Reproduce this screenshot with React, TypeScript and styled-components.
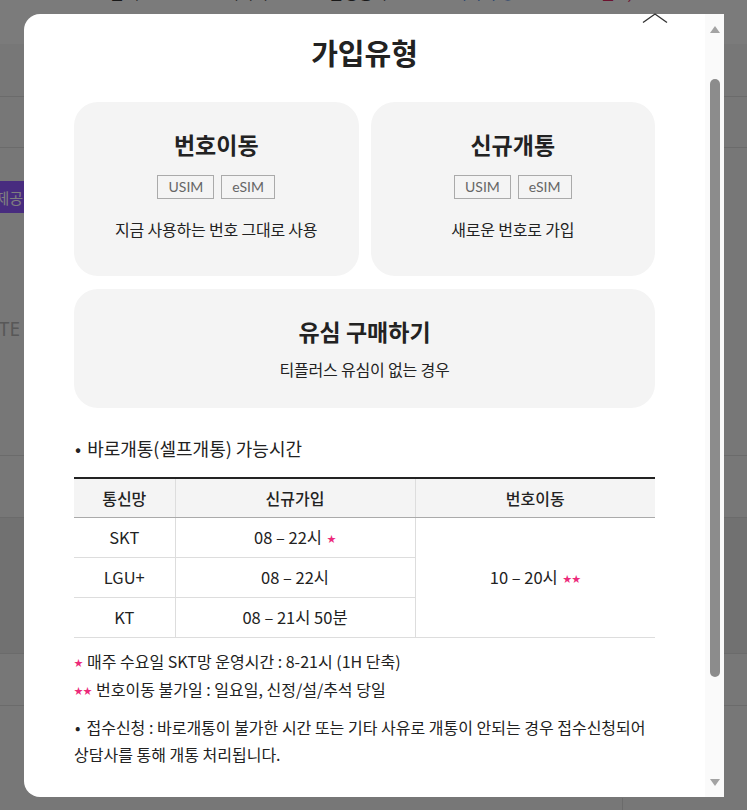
import styled, { createGlobalStyle } from 'styled-components'

const GlobalStyle = createGlobalStyle`
  html, body {
    margin: 0;
    padding: 0;
  }
  body {
    font-family: "Noto Sans CJK KR", "Noto Sans", sans-serif;
    color: #222222;
    overflow: hidden;
  }
  * {
    box-sizing: border-box;
  }
`;

/* ---------- page behind the dialog ---------- */

const Page = styled.div`
  width: 747px;
  height: 810px;
  overflow: hidden;
  background-color: #eeeeee;
  display: flex;
  flex-direction: column;
`;

const TopBar = styled.div`
  height: 44px;
  flex: none;
  background-color: #f6f6f6;
  display: flex;
  align-items: flex-start;
  overflow: hidden;
`;

const TopItem = styled.span<{ $w: number; $color?: string }>`
  flex: none;
  width: ${(p) => p.$w}px;
  margin-top: -18px;
  font-size: 16px;
  line-height: 20px;
  white-space: nowrap;
  color: ${(p) => p.$color || '#333333'};
`;

const BgRow = styled.div<{ $h: number; $shade?: boolean }>`
  flex: none;
  height: ${(p) => p.$h}px;
  border-bottom: 1px solid #d6d6d6;
  background-color: ${(p) => (p.$shade ? '#e2e2e2' : 'transparent')};
  display: flex;
  flex-direction: column;
`;

const BgFill = styled.div`
  flex: 1;
  display: flex;
  justify-content: flex-end;
  padding-right: 124px;
`;

const BgDivider = styled.div`
  width: 1px;
  margin-top: 92px;
  background-color: #d6d6d6;
`;

const Badge = styled.div`
  width: 24px;
  height: 32px;
  margin-top: 33px;
  overflow: hidden;
  display: flex;
  justify-content: flex-end;
  align-items: center;
  background-color: #9058ff;
  color: #ffffff;
  font-size: 15px;
  white-space: nowrap;
  padding-right: 1px;
`;

const SideText = styled.div`
  width: 20px;
  margin-top: 104px;
  overflow: hidden;
  display: flex;
  justify-content: flex-end;
  font-family: "Noto Sans", sans-serif;
  font-size: 19px;
  line-height: 24px;
  color: #b0b0b0;
`;

/* ---------- dialog ---------- */

const Dim = styled.div`
  position: fixed;
  inset: 0;
  background-color: rgba(0, 0, 0, 0.5);
`;

const Frame = styled.div`
  position: fixed;
  top: 14px;
  left: 24px;
  width: 700px;
  height: 783px;
`;

const Dialog = styled.div`
  width: 100%;
  height: 100%;
  display: flex;
  overflow: hidden;
  background-color: #ffffff;
  border-radius: 16px 0 0 16px;
`;

const CloseButton = styled.button`
  position: absolute;
  top: -2px;
  left: 618px;
  padding: 0;
  border: 0;
  background: none;
  line-height: 0;
`;

const Body = styled.div`
  flex: 1;
  overflow: hidden;
  padding: 18px 50px 0;
`;

const Scrollbar = styled.div`
  width: 19px;
  flex: none;
  background-color: #fafafa;
  display: flex;
  flex-direction: column;
  align-items: center;
  padding: 12px 0 11px;
`;

const Arrow = styled.div<{ $down?: boolean }>`
  width: 0;
  height: 0;
  border-left: 5px solid transparent;
  border-right: 5px solid transparent;
  ${(p) =>
    p.$down
      ? 'border-top: 7px solid #a3a3a3; margin-top: auto;'
      : 'border-bottom: 7px solid #a3a3a3;'}
`;

const Thumb = styled.div`
  width: 10px;
  height: 598px;
  margin-top: 46px;
  border-radius: 5px;
  background-color: #8c8c8c;
`;

const Title = styled.h2`
  margin: 0;
  text-align: center;
  font-size: 29px;
  line-height: 40px;
  font-weight: 700;
  color: #222222;
`;

const CardGrid = styled.div`
  margin-top: 30px;
  display: grid;
  grid-template-columns: 1fr 1fr;
  column-gap: 12px;
  row-gap: 13px;
`;

const Card = styled.div<{ $wide?: boolean }>`
  grid-column: ${(p) => (p.$wide ? 'span 2' : 'auto')};
  background-color: #f4f4f4;
  border-radius: 24px;
  text-align: center;
  padding: 27px 0 ${(p) => (p.$wide ? 27 : 35)}px;
`;

const CardTitle = styled.div`
  font-size: 23px;
  line-height: 30px;
  font-weight: 700;
  color: #222222;
`;

const TagRow = styled.div`
  margin-top: 16px;
  display: flex;
  justify-content: center;
  gap: 7px;
`;

const Tag = styled.span`
  height: 24px;
  padding: 0 10px;
  border: 1px solid #aaaaaa;
  font-family: Lato, "Noto Sans", sans-serif;
  font-size: 14px;
  line-height: 22px;
  color: #666666;
`;

const CardDesc = styled.div<{ $gap: number }>`
  margin-top: ${(p) => p.$gap}px;
  font-size: 16px;
  line-height: 24px;
  letter-spacing: -0.2px;
  color: #222222;
`;

const SectionTitle = styled.div`
  margin-top: 27px;
  font-size: 18px;
  line-height: 26px;
  color: #222222;

  &::before {
    content: '•';
    margin: 0 6px 0 1px;
  }
`;

const Table = styled.table`
  width: 100%;
  margin-top: 16px;
  border-collapse: collapse;
  border-top: 2px solid #222222;
  font-size: 16px;
  text-align: center;

  th {
    height: 39px;
    padding: 0;
    font-weight: 500;
    background-color: #f4f4f4;
    border-bottom: 1px solid #aaaaaa;
  }

  td {
    height: 40px;
    padding: 0;
    font-size: 16.5px;
    border-bottom: 1px solid #dddddd;
  }

  th + th,
  td + td {
    border-left: 1px solid #dddddd;
  }
`;

const Star = styled.span`
  margin-left: 5px;
  font-size: 9px;
  vertical-align: 2px;
  color: #ec2a7a;
`;

const Notes = styled.div`
  margin-top: 10px;
  font-size: 16px;
  line-height: 27px;
  color: #222222;
`;

const NoteStar = styled.span`
  margin-right: 4px;
  font-size: 9px;
  vertical-align: 2px;
  color: #ec2a7a;
`;

const Paragraph = styled.p`
  margin: 10px 0 0;
  font-size: 16px;
  line-height: 27px;
  color: #222222;
`;

const FirstLine = styled.span`
  white-space: nowrap;

  &::before {
    content: '•';
    margin: 0 6px 0 1px;
  }
`;

const joinTypes = [
  { name: '번호이동', desc: '지금 사용하는 번호 그대로 사용' },
  { name: '신규개통', desc: '새로운 번호로 가입' },
];

const hours = [
  { carrier: 'SKT', open: '08 – 22시', star: true },
  { carrier: 'LGU+', open: '08 – 22시', star: false },
  { carrier: 'KT', open: '08 – 21시 50분', star: false },
];

export default function App(): JSX.Element {
  return (
    <>
      <GlobalStyle />
      <Page>
        <TopBar>
          <TopItem $w={95} />
          <TopItem $w={129}>요금제</TopItem>
          <TopItem $w={105}>데이터</TopItem>
          <TopItem $w={123}>음성통화</TopItem>
          <TopItem $w={72} $color='#1f6fd6'>테이터 ●</TopItem>
          <TopItem $w={76} $color='#1f6fd6'></TopItem>
          <TopItem $w={70} $color='#d8245e'>월 4,950</TopItem>
        </TopBar>
        <BgRow $h={53} />
        <BgRow $h={51} />
        <BgRow $h={308}>
          <Badge>데이터 추가제공</Badge>
          <SideText>LTE</SideText>
        </BgRow>
        <BgRow $h={62} />
        <BgRow $h={136} $shade />
        <BgRow $h={52} />
        <BgFill>
          <BgDivider />
        </BgFill>
      </Page>

      <Dim />

      <Frame>
        <Dialog>
          <Body>
            <Title>가입유형</Title>

            <CardGrid>
              {joinTypes.map((item) => (
                <Card key={item.name}>
                  <CardTitle>{item.name}</CardTitle>
                  <TagRow>
                    <Tag>USIM</Tag>
                    <Tag>eSIM</Tag>
                  </TagRow>
                  <CardDesc $gap={18}>{item.desc}</CardDesc>
                </Card>
              ))}
              <Card $wide>
                <CardTitle>유심 구매하기</CardTitle>
                <CardDesc $gap={11}>티플러스 유심이 없는 경우</CardDesc>
              </Card>
            </CardGrid>

            <SectionTitle>바로개통(셀프개통) 가능시간</SectionTitle>

            <Table>
              <colgroup>
                <col style={{ width: 101 }} />
                <col style={{ width: 240 }} />
                <col />
              </colgroup>
              <thead>
                <tr>
                  <th>통신망</th>
                  <th>신규가입</th>
                  <th>번호이동</th>
                </tr>
              </thead>
              <tbody>
                {hours.map((row, index) => (
                  <tr key={row.carrier}>
                    <td>{row.carrier}</td>
                    <td>
                      {row.open}
                      {row.star && <Star>★</Star>}
                    </td>
                    {index === 0 && (
                      <td rowSpan={3}>
                        10 – 20시<Star>★★</Star>
                      </td>
                    )}
                  </tr>
                ))}
              </tbody>
            </Table>

            <Notes>
              <div><NoteStar>★</NoteStar>매주 수요일 SKT망 운영시간 : 8-21시 (1H 단축)</div>
              <div><NoteStar>★★</NoteStar>번호이동 불가일 : 일요일, 신정/설/추석 당일</div>
            </Notes>

            <Paragraph>
              <FirstLine>접수신청 : 바로개통이 불가한 시간 또는 기타 사유로 개통이 안되는 경우 접수신청되어</FirstLine>
              <br />
              상담사를 통해 개통 처리됩니다.
            </Paragraph>
          </Body>

          <Scrollbar>
            <Arrow />
            <Thumb />
            <Arrow $down />
          </Scrollbar>
        </Dialog>

        <CloseButton aria-label='닫기'>
          <svg width='26' height='12' viewBox='0 0 26 12' fill='none'>
            <path d='M1 10.5 L13 2 L25 10.5' stroke='#333333' strokeWidth='1.4' />
          </svg>
        </CloseButton>
      </Frame>
    </>
  )
}
